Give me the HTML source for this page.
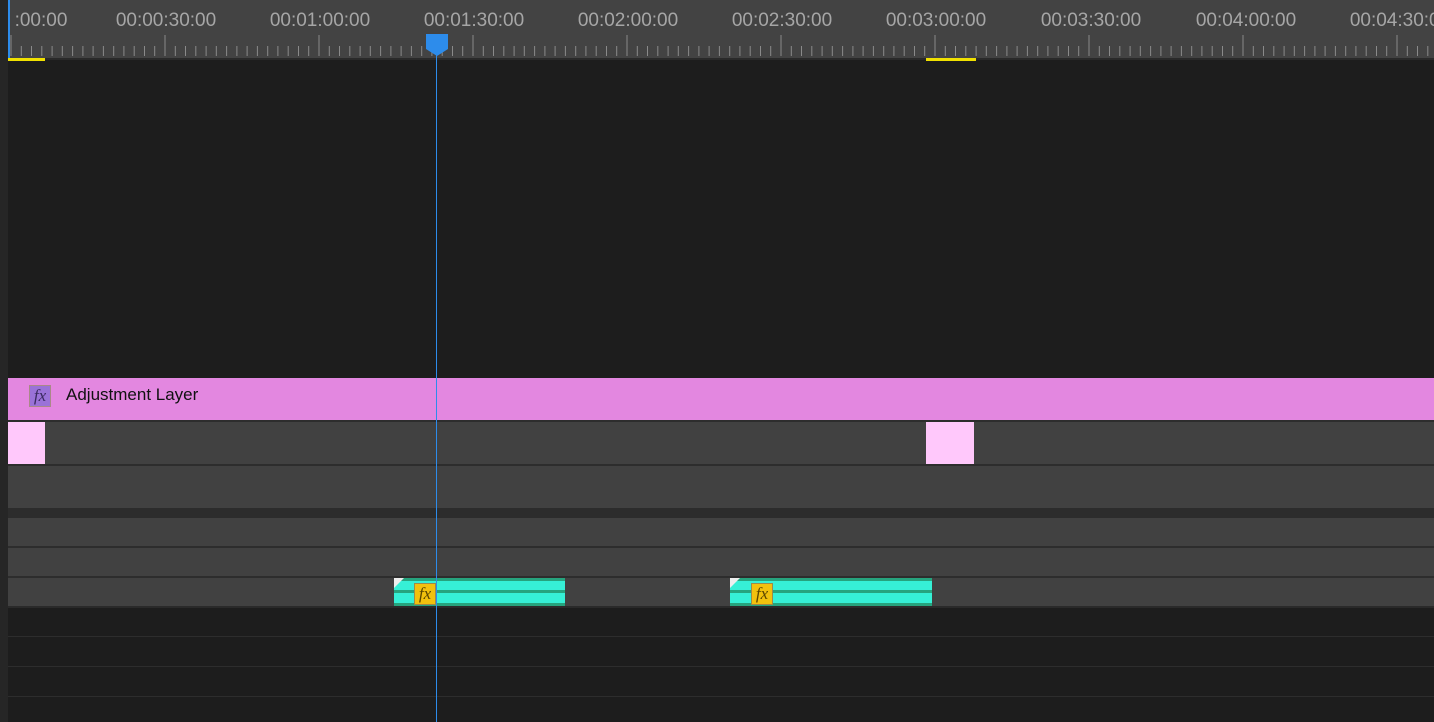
<!DOCTYPE html><html><head><style>
body{margin:0;width:1434px;height:722px;overflow:hidden;background:#1d1d1d;font-family:"Liberation Sans",sans-serif;position:relative}
div{position:absolute}
.row{left:8px;right:0;background:#414141}
.lab{top:10px;font-size:19px;color:#a6a6a6;transform:translateX(-50%);white-space:nowrap}
.hl{left:8px;right:0;height:2px;background:#2d2d2d}
.clip{height:28px;top:578px;background:#26a47e;overflow:hidden}
.fx{width:20px;height:20px;background:#f2c10d;border:1px solid #9c8a4a;font:italic 17px "Liberation Serif",serif;color:#5a4600;text-align:center;line-height:19px;top:5px}
</style></head><body>
<div style="left:0;top:0;width:8px;height:722px;background:#262626"></div>
<div style="left:8px;top:0;right:0;height:58px;background:#434343"></div>
<div style="left:8px;top:58px;right:0;height:2px;background:#2a2a2a"></div>
<svg style="position:absolute;left:0;top:0" width="1434" height="60" id="r"></svg>
<div class="lab" style="left:41px">:00:00</div>
<div class="lab" style="left:166px">00:00:30:00</div>
<div class="lab" style="left:320px">00:01:00:00</div>
<div class="lab" style="left:474px">00:01:30:00</div>
<div class="lab" style="left:628px">00:02:00:00</div>
<div class="lab" style="left:782px">00:02:30:00</div>
<div class="lab" style="left:936px">00:03:00:00</div>
<div class="lab" style="left:1091px">00:03:30:00</div>
<div class="lab" style="left:1246px">00:04:00:00</div>
<div class="lab" style="left:1400px">00:04:30:00</div>
<div style="left:8px;top:58px;width:37px;height:3px;background:#f0e000"></div>
<div style="left:926px;top:58px;width:50px;height:3px;background:#f0e000"></div>
<div style="left:8px;top:378px;right:0;height:42px;background:#e387e0"></div>
<div style="left:29px;top:385px;width:20px;height:20px;background:#9a72d8;border:1px solid #a88;font:italic 17px 'Liberation Serif',serif;color:#3a2a60;text-align:center;line-height:19px">fx</div>
<div style="left:66px;top:385px;font-size:17px;color:#111">Adjustment Layer</div>
<div class="hl" style="top:420px"></div>
<div class="row" style="top:422px;height:42px"></div>
<div style="left:8px;top:422px;width:37px;height:42px;background:#ffc8fb"></div>
<div style="left:926px;top:422px;width:48px;height:42px;background:#ffc8fb"></div>
<div class="hl" style="top:464px"></div>
<div class="row" style="top:466px;height:42px"></div>
<div style="left:8px;top:508px;right:0;height:10px;background:#2c2c2c"></div>
<div class="row" style="top:518px;height:28px"></div>
<div class="hl" style="top:546px"></div>
<div class="row" style="top:548px;height:28px"></div>
<div class="hl" style="top:576px"></div>
<div class="row" style="top:578px;height:28px"></div>
<div class="clip" style="left:394px;width:171px"><div style="left:0;right:0;top:3px;height:9px;background:#36f0d6"></div><div style="left:0;right:0;top:15px;height:10px;background:#36f0d6"></div><div style="left:0;top:0;width:0;height:0;border-top:10px solid #eee;border-right:10px solid transparent"></div><div class="fx" style="left:20px">fx</div></div>
<div class="clip" style="left:730px;width:202px"><div style="left:0;right:0;top:3px;height:9px;background:#36f0d6"></div><div style="left:0;right:0;top:15px;height:10px;background:#36f0d6"></div><div style="left:0;top:0;width:0;height:0;border-top:10px solid #eee;border-right:10px solid transparent"></div><div class="fx" style="left:21px">fx</div></div>
<div class="hl" style="top:606px;background:#2a2a2a"></div>
<div class="hl" style="top:636px;height:1px"></div>
<div class="hl" style="top:666px;height:1px"></div>
<div class="hl" style="top:696px;height:1px"></div>
<div style="left:436px;top:50px;width:1px;height:672px;background:#2d8ceb"></div>
<div style="left:8px;top:0;width:2px;height:58px;background:#2d8ceb"></div>
<svg style="position:absolute;left:426px;top:34px" width="22" height="24"><path d="M0 0H22V15L11 22L0 15Z" fill="#2d8ceb"/></svg>
<script>
var s='',z=11,p=154/15;
for(var i=0;i<=140;i++){var x=z+i*p;if(x>1434)break;var big=i%15==0;s+='<line x1="'+x.toFixed(1)+'" x2="'+x.toFixed(1)+'" y1="'+(big?35:46)+'" y2="56" stroke="#8a8a8a" stroke-width="1"/>';}
document.getElementById('r').innerHTML=s;
</script>
</body></html>
